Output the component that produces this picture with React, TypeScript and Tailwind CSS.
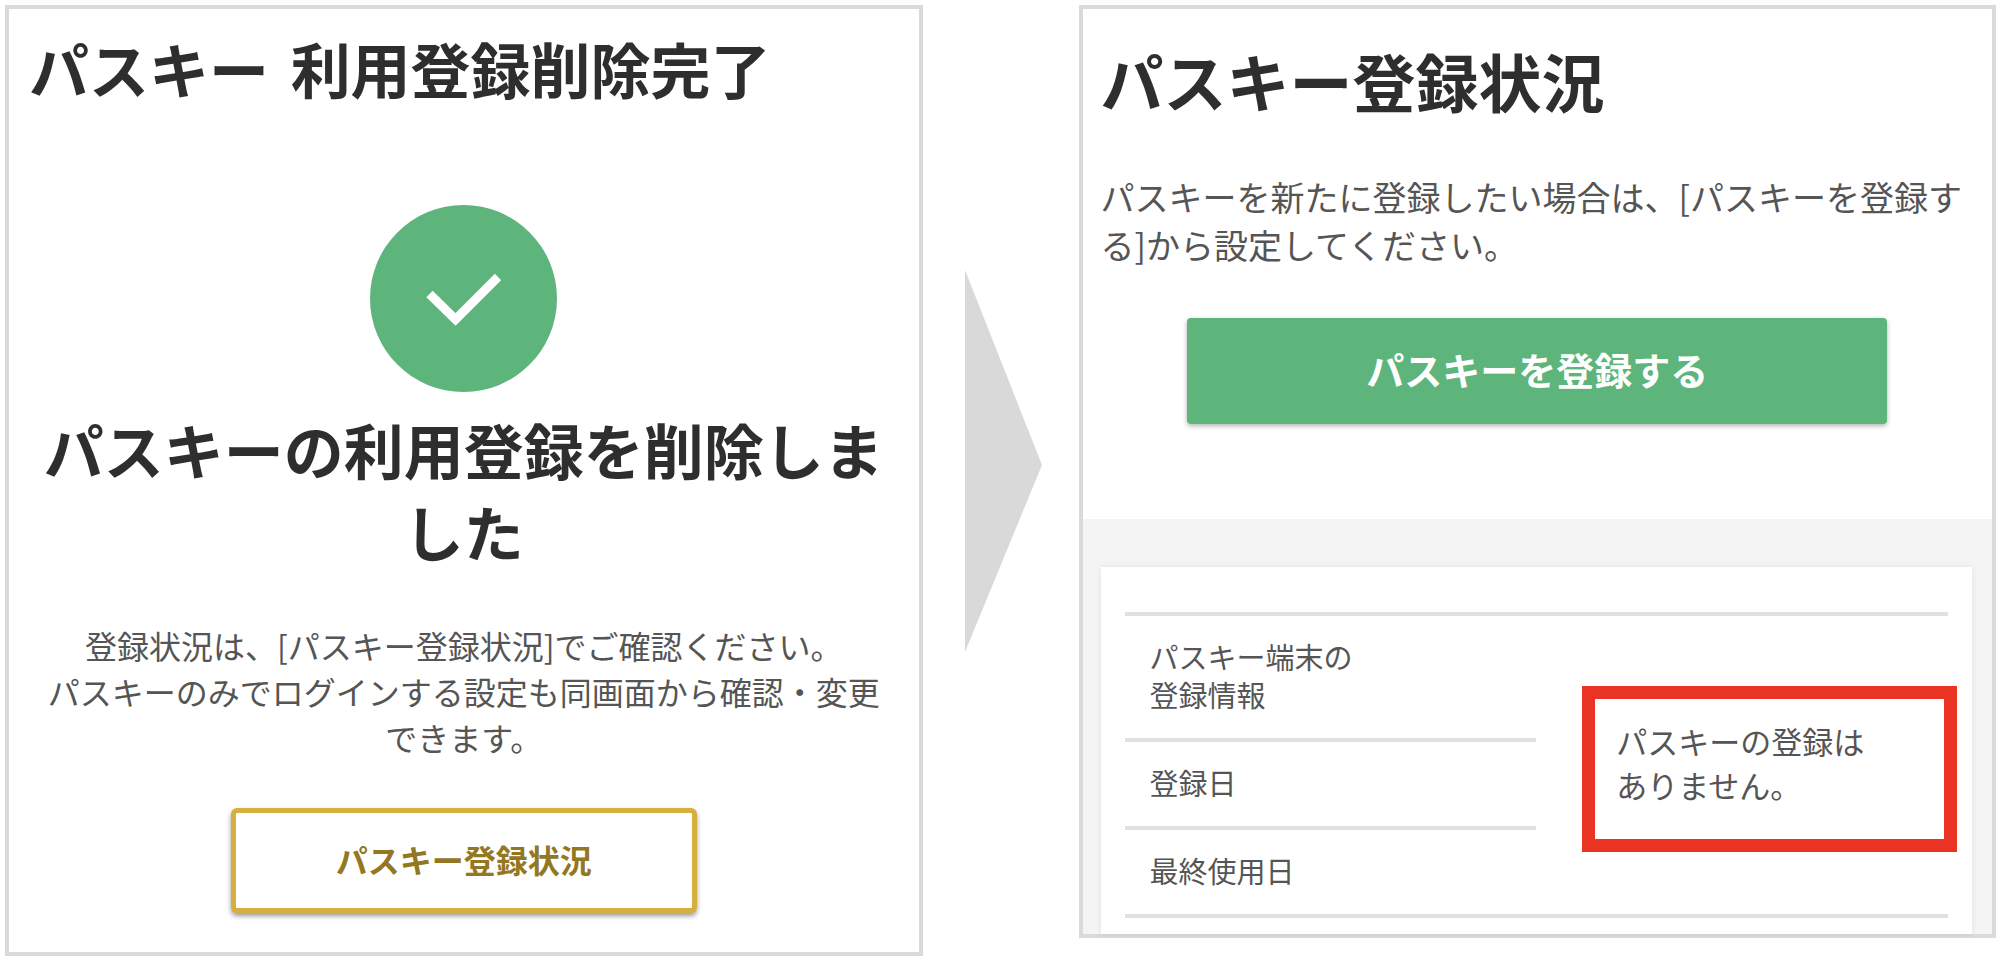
import type { ReactNode } from "react";

interface PanelProps {
  title: ReactNode;
  children: ReactNode;
  className?: string;
  titleClassName?: string;
}

function Panel({ title, children, className = "", titleClassName = "" }: PanelProps) {
  return (
    <section className={`min-w-0 flex-1 border-4 border-[#dadada] bg-white ${className}`}>
      <h1 className={`font-bold leading-[72px] text-[#2e2e2e] ${titleClassName}`}>{title}</h1>
      {children}
    </section>
  );
}

function CheckCircle() {
  return (
    <svg viewBox="0 0 187 187" className="h-[187px] w-[187px]" aria-hidden="true">
      <circle cx="93.5" cy="93.5" r="93.5" fill="#5db57c" />
      <path d="M59.5 89 85.5 114.5 128 72" fill="none" stroke="#fff" strokeWidth="9" />
    </svg>
  );
}

function NextArrow() {
  return (
    <svg
      viewBox="0 0 77 382"
      className="ml-[42px] mr-[37px] mt-[265px] h-[382px] w-[77px] shrink-0"
      aria-hidden="true"
    >
      <path d="M0 0 77 195 0 382Z" fill="#d9d9d9" />
    </svg>
  );
}

function DeletedPanel() {
  return (
    <Panel
      title={
        <>
          パスキー <span className="ml-2">利用登録削除完了</span>
        </>
      }
      className="pb-[39px] pt-[23px]"
      titleClassName="pl-5 text-[60px]"
    >
      <div className="mt-[101px] flex flex-col items-center px-8 text-center">
        <CheckCircle />
        <h2 className="mt-4 text-[60px] font-bold leading-[82px] text-[#2e2e2e]">
          パスキーの利用登録を削除しました
        </h2>
        <p className="mt-[50px] text-[32px] leading-[46px] text-[#555]">
          登録状況は、[パスキー登録状況]でご確認ください。
          <br />
          パスキーのみでログインする設定も同画面から確認・変更できます。
        </p>
        <button
          type="button"
          className="mt-12 h-[105px] w-[466px] rounded-md border-[5px] border-[#d5b03f] bg-white pb-1 text-[32px] font-bold leading-[46px] text-[#937722] shadow-[0_3px_5px_rgba(0,0,0,0.4)]"
        >
          パスキー登録状況
        </button>
      </div>
    </Panel>
  );
}

function PasskeyTable() {
  const th = "border-b-4 border-[#e0e0e0] pb-1 pl-[25px] text-left font-normal";

  return (
    <table className="w-full border-separate border-spacing-0 border-t-4 border-[#e0e0e0] text-[29px] leading-[38px] text-[#555]">
      <tbody>
        <tr className="h-[126px]">
          <th scope="row" className={`w-1/2 ${th}`}>
            パスキー端末の
            <br />
            登録情報
          </th>
          <td
            rowSpan={3}
            className="relative border-b-4 border-[#e0e0e0] pb-1 pl-[80px] text-[31px] leading-[44px]"
          >
            パスキーの登録は
            <br />
            ありません。
            <div className="pointer-events-none absolute -right-[9px] bottom-[62px] left-[46px] top-[70px] border-[13px] border-[#ea3323]" />
          </td>
        </tr>
        <tr className="h-[88px]">
          <th scope="row" className={th}>登録日</th>
        </tr>
        <tr className="h-[88px]">
          <th scope="row" className={th}>最終使用日</th>
        </tr>
      </tbody>
    </table>
  );
}

function StatusPanel() {
  return (
    <Panel title="パスキー登録状況" className="pt-[35px]" titleClassName="pl-[18px] text-[63px]">
      <p className="mt-[57px] px-[18px] text-[34px] leading-[48px] text-[#555]">
        パスキーを新たに登録したい場合は、[パスキーを登録する]から設定してください。
      </p>
      <div className="mt-[49px] flex justify-center">
        <button
          type="button"
          className="h-[106px] w-[700px] rounded bg-[#5db57c] pb-1 text-[38px] font-bold leading-[48px] text-white shadow-[0_2px_5px_rgba(0,0,0,0.3)]"
        >
          パスキーを登録する
        </button>
      </div>
      <div className="mt-[95px] bg-[#f4f4f4] pl-[18px] pr-5 pt-12">
        <div className="bg-white px-6 pb-4 pt-[45px] shadow-[0_0_6px_rgba(0,0,0,0.08)]">
          <PasskeyTable />
        </div>
      </div>
    </Panel>
  );
}

export default function App() {
  return (
    <main
      lang="ja"
      className="flex items-start bg-white pb-[18px] pl-[5px] pr-3 pt-[5px] font-['Noto_Sans_CJK_JP',sans-serif]"
    >
      <DeletedPanel />
      <NextArrow />
      <StatusPanel />
    </main>
  );
}
